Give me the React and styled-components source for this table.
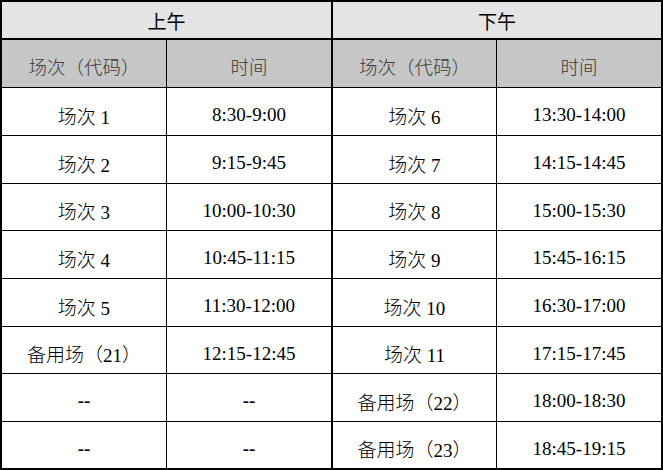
import React from "react";
import styled, { createGlobalStyle } from "styled-components";

const Global = createGlobalStyle`
  html, body { margin: 0; padding: 0; background: #fff; }
  body { font-family: "Liberation Serif", "Noto Sans CJK SC", serif; }
`;

const Sheet = styled.div`
  box-sizing: border-box;
  width: 663px;
  height: 470px;
  border: 2px solid #000;
  display: grid;
  grid-template-columns: 165px 166px 164px 164px;
  grid-template-rows: 38px 48px 48px 48px 47px 48px 48px 47px 48px 46px;
  background: #fff;
`;

const Cell = styled.div`
  box-sizing: border-box;
  grid-column: span ${(p) => p.$span || 1};
  border-right: ${(p) => p.$right || 0}px solid #000;
  border-bottom: ${(p) => p.$bottom || 0}px solid #000;
  display: flex;
  align-items: center;
  justify-content: center;
  padding-top: ${(p) => p.$shift || 0}px;
  font-family: "Liberation Serif", "Noto Sans CJK SC", serif;
  font-size: 19px;
  font-weight: 300;
  color: #000;
  white-space: pre;
`;

const TitleCell = styled(Cell)`
  background: #e4e4e4;
  font-size: 19px;
  font-weight: 400;
  color: #000;
`;

const HeadCell = styled(Cell)`
  background: #c6c6c6;
  font-size: 18.5px;
  color: #3a3a3a;
`;

const Dash = styled.span`
  font-weight: 700;
`;

const rights = [1, 2, 1, 0];

const rows = [
  ["场次 1", "8:30-9:00", "场次 6", "13:30-14:00"],
  ["场次 2", "9:15-9:45", "场次 7", "14:15-14:45"],
  ["场次 3", "10:00-10:30", "场次 8", "15:00-15:30"],
  ["场次 4", "10:45-11:15", "场次 9", "15:45-16:15"],
  ["场次 5", "11:30-12:00", "场次 10", "16:30-17:00"],
  ["备用场（21）", "12:15-12:45", "场次 11", "17:15-17:45"],
  ["--", "--", "备用场（22）", "18:00-18:30"],
  ["--", "--", "备用场（23）", "18:45-19:15"],
];

const heads = ["场次（代码）", "时间", "场次（代码）", "时间"];

export default function App() {
  return (
    <>
      <Global />
      <Sheet>
        <TitleCell $span={2} $right={2} $bottom={2} $shift={1}>上午</TitleCell>
        <TitleCell $span={2} $bottom={2} $shift={1}>下午</TitleCell>
        {heads.map((h, i) => (
          <HeadCell key={"h" + i} $right={rights[i]} $bottom={1} $shift={5}>
            {h}
          </HeadCell>
        ))}
        {rows.map((r, ri) =>
          r.map((c, ci) => (
            <Cell
              key={ri + "-" + ci}
              $right={rights[ci]}
              $bottom={ri === rows.length - 1 ? 0 : 1}
              $shift={7}
            >
              {c === "--" ? <Dash>--</Dash> : c}
            </Cell>
          ))
        )}
      </Sheet>
    </>
  );
}
